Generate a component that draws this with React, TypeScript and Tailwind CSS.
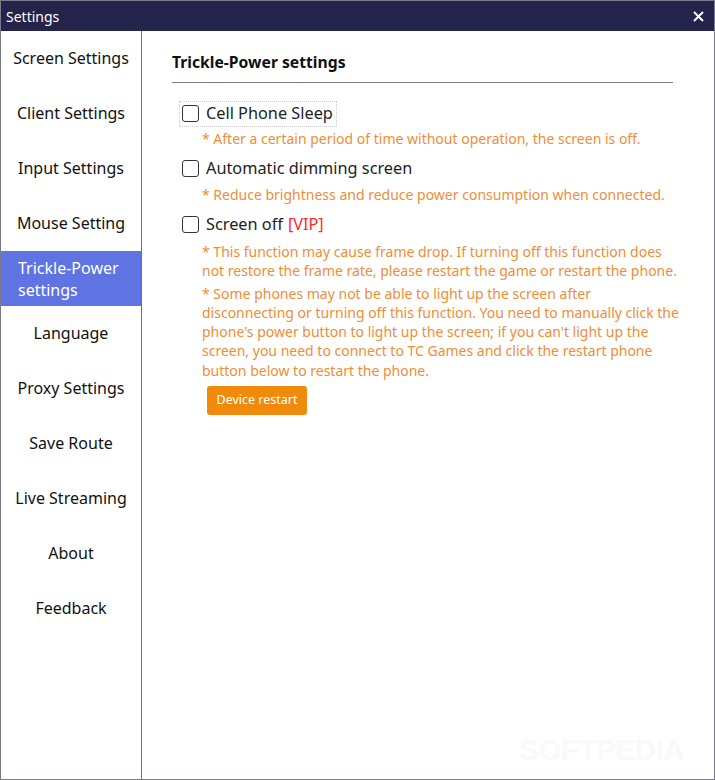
import React from "react";

const items = [
  "Screen Settings",
  "Client Settings",
  "Input Settings",
  "Mouse Setting",
  "Trickle-Power settings",
  "Language",
  "Proxy Settings",
  "Save Route",
  "Live Streaming",
  "About",
  "Feedback",
];

function Box() {
  return <span className="inline-block w-[17px] h-[17px] border border-[#333] rounded-[3px] bg-white shrink-0" />;
}

export default function App() {
  return (
    <div
      className="w-[715px] h-[780px] flex flex-col border border-[#7a7a8c] bg-white relative overflow-hidden"
      style={{ fontFamily: '"Noto Sans", "Open Sans", sans-serif' }}
    >
      <div className="h-[30px] bg-[#24234a] flex items-center justify-between pl-[5px] pr-[10px] text-white shrink-0">
        <span className="text-[14px]">Settings</span>
        <svg width="11" height="11" viewBox="0 0 11 11" className="mt-[1px]">
          <path d="M1 1 L10 10 M10 1 L1 10" stroke="white" strokeWidth="2" />
        </svg>
      </div>
      <div className="flex flex-1">
        <div className="w-[141px] border-r border-[#6e6e80] flex flex-col shrink-0">
          {items.map((t) =>
            t === "Trickle-Power settings" ? (
              <div key={t} className="h-[55px] bg-[#5f73e3] text-white flex items-center pl-[17px] text-[16px] leading-[22px]">
                <span>Trickle-Power<br />settings</span>
              </div>
            ) : (
              <div key={t} className="h-[55px] flex items-center justify-center text-[16px] text-[#111] pb-[2px]">
                {t}
              </div>
            )
          )}
        </div>
        <div className="flex-1 pl-[30px] pr-[41px] pt-[20px]">
          <div className="text-[15.7px] font-bold text-[#111] pb-[7px] border-b border-[#7a7a8c]">Trickle-Power settings</div>
          <div className="pl-[10px] pt-[19px] flex flex-col -mr-[13px]">
            <label className="flex items-center gap-[7px] text-[16.3px] text-[#222] h-[24px] outline-1 outline-dotted outline-[#ccc] self-start pr-[3px] -ml-[2px] pl-[2px]">
              <Box />Cell Phone Sleep
            </label>
            <div className="text-[14px] text-[#f08d36] pl-[20px] mt-[3px] leading-[19.5px]">* After a certain period of time without operation, the screen is off.</div>
            <label className="flex items-center gap-[7px] text-[16.3px] text-[#222] h-[24px] mt-[8px]">
              <Box />Automatic dimming screen
            </label>
            <div className="text-[14px] text-[#f08d36] pl-[20px] mt-[5px] leading-[19.5px]">* Reduce brightness and reduce power consumption when connected.</div>
            <label className="flex items-center gap-[7px] text-[16.3px] text-[#222] h-[24px] mt-[8px]">
              <Box />Screen off <span className="text-[#ff2a2a] ml-[-2px]">[VIP]</span>
            </label>
            <div className="text-[14px] text-[#f08d36] pl-[20px] mt-[5px] leading-[19.5px]">
              * This function may cause frame drop. If turning off this function does not restore the frame rate, please restart the game or restart the phone.
            </div>
            <div className="text-[14px] text-[#f08d36] pl-[20px] mt-[3px] leading-[19.3px]">
              * Some phones may not be able to light up the screen after disconnecting or turning off this function. You need to manually click the phone's power button to light up the screen; if you can't light up the screen, you need to connect to TC Games and click the restart phone button below to restart the phone.
            </div>
            <div className="pl-[25px] mt-[6px]">
              <button className="bg-[#f08a0c] text-white text-[12.5px] rounded-[3px] w-[100px] h-[29px]">Device restart</button>
            </div>
          </div>
        </div>
      </div>
      <div className="absolute left-[518px] top-[726px] text-[30px] font-bold text-[#f9f9fb] tracking-tight pointer-events-none" style={{ fontFamily: '"Liberation Sans", sans-serif' }}>
        SOFTPEDIA
      </div>
    </div>
  );
}
